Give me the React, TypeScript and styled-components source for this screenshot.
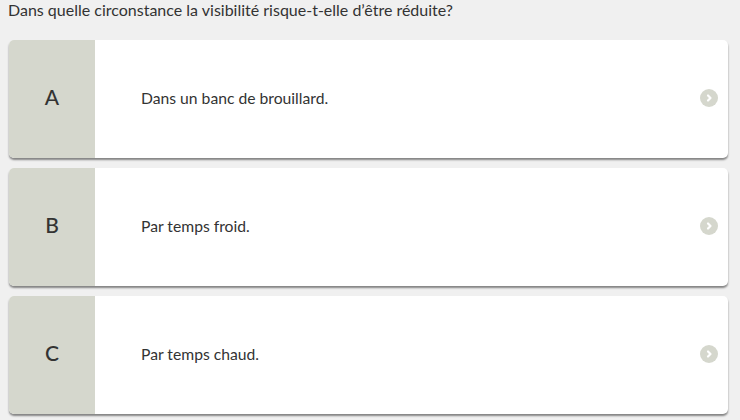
import React from "react";
import styled, { createGlobalStyle } from "styled-components";

const Global = createGlobalStyle`
  html, body { margin: 0; padding: 0; background: #f0f0f0; }
  body { font-family: Lato, "Open Sans", sans-serif; color: #333; }
`;

const Page = styled.div`
  width: 740px;
  height: 420px;
  padding: 0 12px 0 9px;
  box-sizing: border-box;
`;

const Question = styled.div`
  font-size: 16px;
  line-height: 20px;
  padding: 0 0 0 8px;
  margin-left: -9px;
  color: #333;
`;

const List = styled.div`
  display: flex;
  flex-direction: column;
  gap: 10px;
  margin-top: 20px;
`;

const Card = styled.div`
  display: flex;
  height: 118px;
  background: #fff;
  border-radius: 5px;
  overflow: hidden;
  box-shadow: 0 2px 2px rgba(0, 0, 0, 0.45);
`;

const Letter = styled.div`
  width: 86px;
  flex: none;
  background: #d5d7cd;
  display: flex;
  align-items: center;
  justify-content: center;
  font-size: 21px;
  font-weight: 500;
  padding-bottom: 5px;
  box-sizing: border-box;
  color: #333;
`;

const Answer = styled.div`
  flex: 1;
  display: flex;
  align-items: center;
  padding-left: 46px;
  padding-bottom: 2px;
  font-size: 15.7px;
  color: #333;
`;

const Arrow = styled.div`
  width: 18px;
  height: 18px;
  margin-right: 10px;
  margin-bottom: 2px;
  align-self: center;
  border-radius: 50%;
  background: #d5d7cd;
  display: flex;
  align-items: center;
  justify-content: center;
`;

const options = [
  { l: "A", t: "Dans un banc de brouillard." },
  { l: "B", t: "Par temps froid." },
  { l: "C", t: "Par temps chaud." },
];

export default function App() {
  return (
    <Page>
      <Global />
      <Question>Dans quelle circonstance la visibilité risque-t-elle d’être réduite?</Question>
      <List>
        {options.map((o) => (
          <Card key={o.l}>
            <Letter>{o.l}</Letter>
            <Answer>{o.t}</Answer>
            <Arrow>
              <svg width="10" height="10" viewBox="0 0 10 10">
                <path d="M4 2.5 L6.5 5 L4 7.5" stroke="#fff" strokeWidth="2.2" fill="none" strokeLinecap="round" strokeLinejoin="round" />
              </svg>
            </Arrow>
          </Card>
        ))}
      </List>
    </Page>
  );
}
